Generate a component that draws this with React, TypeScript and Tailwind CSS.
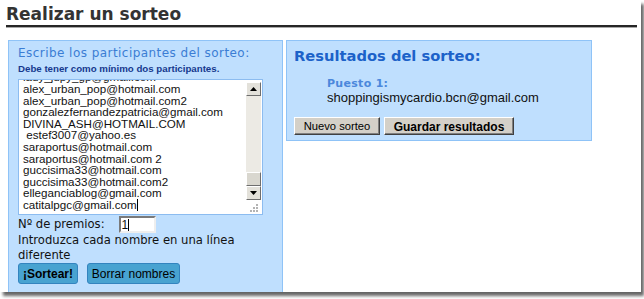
import React from 'react';

// --- datos de la lista (el textarea está desplazado hasta abajo) ---
const participantes = [
  'mariajo_pop@gmail.com',
  'lady_jupy_gp@gmail.com',
  'alex_urban_pop@hotmail.com',
  'alex_urban_pop@hotmail.com2',
  'gonzalezfernandezpatricia@gmail.com',
  'DIVINA_ASH@HOTMAIL.COM',
  ' estef3007@yahoo.es',
  'saraportus@hotmail.com',
  'saraportus@hotmail.com 2',
  'guccisima33@hotmail.com',
  'guccisima33@hotmail.com2',
  'elleganciablog@gmail.com',
];

const Arrow = ({ up }: { up?: boolean }) => (
  <svg width="7" height="4" viewBox="0 0 7 4">
    {up ? <polygon points="0,4 7,4 3.5,0" fill="#000" /> : <polygon points="0,0 7,0 3.5,4" fill="#000" />}
  </svg>
);

const ResizeGrip = () => (
  <svg width="9" height="9" viewBox="0 0 9 9">
    <rect x="6" y="1" width="2" height="2" fill="#b3b3b3" />
    <rect x="3" y="4" width="2" height="2" fill="#b3b3b3" />
    <rect x="6" y="4" width="2" height="2" fill="#b3b3b3" />
    <rect x="0" y="7" width="2" height="2" fill="#b3b3b3" />
    <rect x="3" y="7" width="2" height="2" fill="#b3b3b3" />
    <rect x="6" y="7" width="2" height="2" fill="#b3b3b3" />
  </svg>
);

const ScrollButton = ({ children }: { children: React.ReactNode }) => (
  <div className="h-[14px] flex items-center justify-center bg-[#e3e1da] border border-t-white border-l-white border-r-[#6e6e6e] border-b-[#6e6e6e]">
    {children}
  </div>
);

export default function App() {
  return (
    <div className="w-[644px] h-[299px] bg-white overflow-hidden">
      <div className="w-[641px] h-[292px] bg-white shadow-[3px_4px_3px_rgba(0,0,0,0.6)] overflow-hidden">
        {/* Título */}
        <div className="ml-[6px] w-[631px] border-b-2 border-[#262626] shadow-[0_1px_0_#a8a8a8]">
          <h1 className="pt-[3px] h-[25px] leading-[23px] text-[17px] font-bold text-[#333] font-['DejaVu_Sans',sans-serif]">
            Realizar un sorteo
          </h1>
        </div>

        {/* Paneles */}
        <div className="flex items-start gap-[3px] ml-[8px] mt-[13px]">
          {/* Participantes */}
          <div className="w-[275px] h-[260px] bg-[#bfdffe] border border-[#8fc3f7] pl-[9px] pr-[9px] pt-[5px] font-['DejaVu_Sans',sans-serif]">
            <h2 className="text-[12px] leading-[14px] tracking-[0.45px] text-[#3b7dd4]">
              Escribe los participantes del sorteo:
            </h2>
            <p className="mt-[3px] text-[9.7px] leading-[12px] font-bold text-[#16398e] font-['Liberation_Sans',Arial,sans-serif]">
              Debe tener como mínimo dos participantes.
            </p>

            {/* textarea */}
            <div className="mt-[4px] w-[245px] h-[136px] bg-white border border-[#8cbcf0] flex">
              <div className="flex-1 flex flex-col justify-end overflow-hidden pl-[4px] pb-[3px] text-[11.6px] leading-[11.6px] text-[#111] font-['Liberation_Sans',Arial,sans-serif]">
                {participantes.map((p, i) => (
                  <div key={i} className="whitespace-pre">{p}</div>
                ))}
                <div className="whitespace-pre flex items-center">
                  catitalpgc@gmail.com<span className="inline-block w-px h-[12px] bg-black" />
                </div>
              </div>
              <div className="w-[15px] mr-[1px] pt-[2px] flex flex-col">
                <ScrollButton><Arrow up /></ScrollButton>
                <div className="flex-1 bg-[#eceae4] flex flex-col justify-end">
                  <div className="h-[14px] bg-[#d9d7cf] border border-t-white border-l-white border-r-[#6e6e6e] border-b-[#6e6e6e]" />
                </div>
                <ScrollButton><Arrow /></ScrollButton>
                <div className="h-[14px] flex items-center justify-end pr-[2px]">
                  <ResizeGrip />
                </div>
              </div>
            </div>

            {/* premios */}
            <div className="mt-[1px] flex items-center gap-[14px] text-[11.6px] text-[#111]">
              <span>Nº de premios:</span>
              <div className="w-[37px] h-[16.5px] bg-white border-2 border-t-[#7a7a7a] border-l-[#7a7a7a] border-r-[#eeeeee] border-b-[#eeeeee] flex items-center pl-[1px] text-[12px] font-['Liberation_Sans',Arial,sans-serif]">
                1<span className="inline-block w-px h-[12px] bg-black" />
              </div>
            </div>
            <p className="text-[11.6px] leading-[14.3px] text-[#111]">
              Introduzca cada nombre en una línea diferente
            </p>

            <div className="mt-[1.5px] flex gap-[9px] font-['Liberation_Sans',Arial,sans-serif] text-[12px] text-black">
              <button className="h-[21px] w-[60px] rounded-[3px] bg-[#48a3d1] border border-[#3384bf] font-bold">
                ¡Sortear!
              </button>
              <button className="h-[21px] w-[93px] rounded-[3px] bg-[#48a3d1] border border-[#3384bf]">
                Borrar nombres
              </button>
            </div>
          </div>

          {/* Resultados */}
          <div className="w-[306px] bg-[#bfdffe] border border-[#8fc3f7] pl-[7px] pt-[6px] pb-[5px]">
            <h2 className="text-[14.7px] leading-[18px] font-bold text-[#1c62c9] font-['DejaVu_Sans',sans-serif]">
              Resultados del sorteo:
            </h2>
            <div className="ml-[33px] mt-[12px]">
              <div className="text-[11px] leading-[13px] tracking-[0.3px] font-bold text-[#4b88dc] font-['DejaVu_Sans',sans-serif]">
                Puesto 1:
              </div>
              <div className="text-[13px] leading-[15px] text-[#111] font-['Liberation_Sans',Arial,sans-serif]">
                shoppingismycardio.bcn@gmail.com
              </div>
            </div>
            <div className="mt-[11.5px] flex gap-[4px] font-['Liberation_Sans',Arial,sans-serif] text-black">
              <button className="h-[18px] w-[86px] bg-[#d4d0c8] border border-t-white border-l-white border-r-[#404040] border-b-[#404040] shadow-[inset_-1px_-1px_0_#808080] text-[11.2px]">
                Nuevo sorteo
              </button>
              <button className="h-[18px] w-[130px] bg-[#d4d0c8] border border-t-white border-l-white border-r-[#404040] border-b-[#404040] shadow-[inset_-1px_-1px_0_#808080] text-[12px] font-bold">
                Guardar resultados
              </button>
            </div>
          </div>
        </div>
      </div>
    </div>
  );
}
